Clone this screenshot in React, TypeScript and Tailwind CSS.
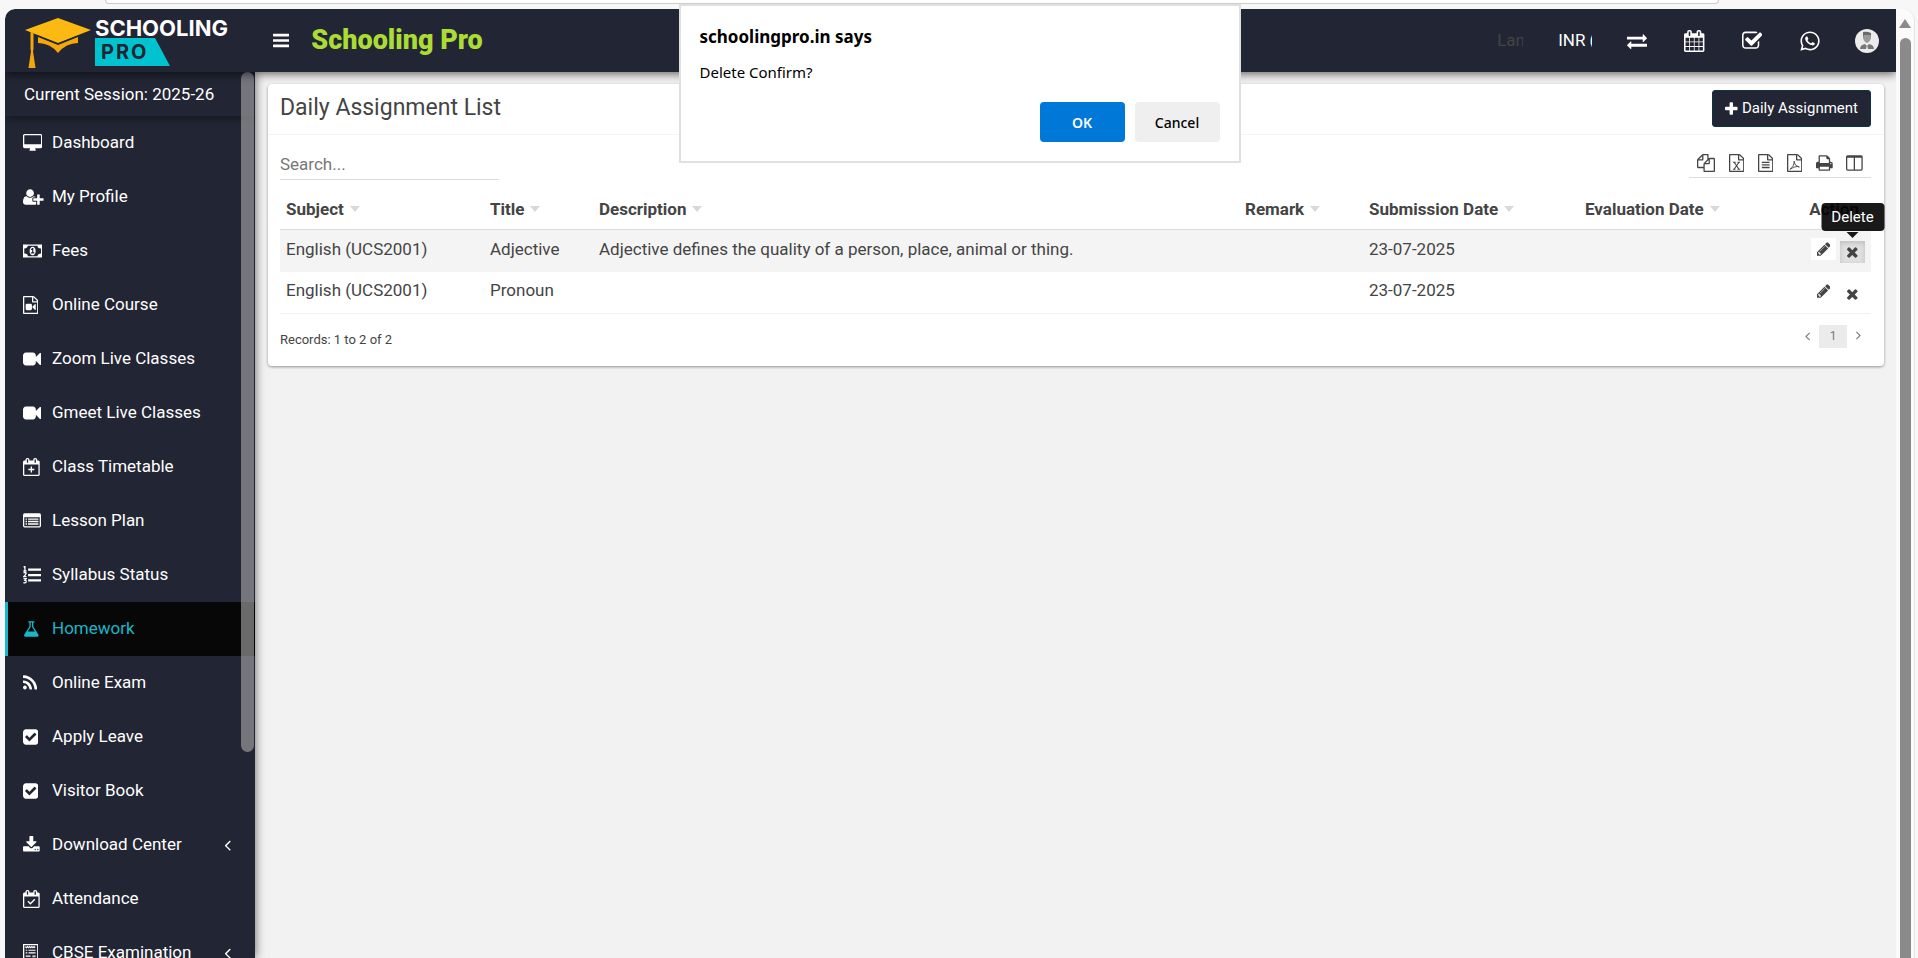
import type { ReactNode } from "react";
import { FaWhatsapp } from "react-icons/fa";

type IconProps = { className?: string };

// every glyph sits on a 1792 unit tall box, x and w crop its side bearings
function Glyph({
  d,
  x = 0,
  w = 1792,
  className = "h-[18px]",
  children,
}: IconProps & { d?: string; x?: number; w?: number; children?: ReactNode }) {
  return (
    <svg
      viewBox={`${x} 0 ${w} 1792`}
      className={`w-auto shrink-0 fill-current ${className}`}
      aria-hidden="true"
    >
      {d && <path fillRule="evenodd" d={d} />}
      {children}
    </svg>
  );
}

const paths = {
  bars: "M1664 1344v128q0 26-19 45t-45 19h-1408q-26 0-45-19t-19-45v-128q0-26 19-45t45-19h1408q26 0 45 19t19 45zm0-512v128q0 26-19 45t-45 19h-1408q-26 0-45-19t-19-45v-128q0-26 19-45t45-19h1408q26 0 45 19t19 45zm0-512v128q0 26-19 45t-45 19h-1408q-26 0-45-19t-19-45v-128q0-26 19-45t45-19h1408q26 0 45 19t19 45z",
  desktop:
    "M1792 992v-832q0-13-9.5-22.5t-22.5-9.5h-1600q-13 0-22.5 9.5t-9.5 22.5v832q0 13 9.5 22.5t22.5 9.5h1600q13 0 22.5-9.5t9.5-22.5zm128-832v1088q0 66-47 113t-113 47h-544q0 37 16 77.5t32 71 16 43.5q0 26-19 45t-45 19h-512q-26 0-45-19t-19-45q0-14 16-44t32-70 16-78h-544q-66 0-113-47t-47-113v-1088q0-66 47-113t113-47h1600q66 0 113 47t47 113z",
  userPlus:
    "M704 896q-159 0-271.5-112.5t-112.5-271.5 112.5-271.5 271.5-112.5 271.5 112.5 112.5 271.5-112.5 271.5-271.5 112.5zm960 128h352q13 0 22.5 9.5t9.5 22.5v192q0 13-9.5 22.5t-22.5 9.5h-352v352q0 13-9.5 22.5t-22.5 9.5h-192q-13 0-22.5-9.5t-9.5-22.5v-352h-352q-13 0-22.5-9.5t-9.5-22.5v-192q0-13 9.5-22.5t22.5-9.5h352v-352q0-13 9.5-22.5t22.5-9.5h192q13 0 22.5 9.5t9.5 22.5v352zm-736 224q0 52 38 90t90 38h256v238q-68 50-171 50h-874q-121 0-194-69t-73-190q0-53 3.5-103.5t14-109 26.5-108.5 43-97.5 62-81 85.5-53.5 111.5-20q19 0 39 17 79 61 154.5 91.5t164.5 30.5 164.5-30.5 154.5-91.5q20-17 39-17 132 0 217 96h-223q-52 0-90 38t-38 90v192z",
  file: "M1596 380q28 28 48 76t20 88v1152q0 40-28 68t-68 28h-1344q-40 0-68-28t-28-68v-1600q0-40 28-68t68-28h896q40 0 88 20t76 48zm-444-244v376h376q-10-29-22-41l-313-313q-12-12-41-22zm384 1528v-1024h-416q-40 0-68-28t-28-68v-416h-768v1536h1280z",
  video:
    "M1792 352v1088q0 42-39 59-13 5-25 5-27 0-45-19l-403-403v166q0 119-84.5 203.5t-203.5 84.5h-704q-119 0-203.5-84.5t-84.5-203.5v-704q0-119 84.5-203.5t203.5-84.5h704q119 0 203.5 84.5t84.5 203.5v165l403-402q18-19 45-19 12 0 25 5 39 17 39 59z",
  flask:
    "M1591 1448q56 89 21.5 152.5t-140.5 63.5h-1152q-106 0-140.5-63.5t21.5-152.5l503-793v-399h-64q-26 0-45-19t-19-45 19-45 45-19h512q26 0 45 19t19 45-19 45-45 19h-64v399zm-779-725l-272 429h712l-272-429-20-31v-436h-128v436z",
  rss: "M576 1344q0 80-56 136t-136 56-136-56-56-136 56-136 136-56 136 56 56 136zm512 123q2 28-17 48-18 21-47 21h-135q-25 0-43-16.5t-20-41.5q-22-229-184.5-391.5t-391.5-184.5q-25-2-41.5-20t-16.5-43v-135q0-29 21-47 17-17 43-17h5q160 13 306 80.5t259 181.5q114 113 181.5 259t80.5 306zm512 2q2 27-18 47-18 20-46 20h-143q-26 0-44.5-17.5t-19.5-42.5q-12-215-101-408.5t-231.5-336-336-231.5-408.5-102q-25-1-42.5-19.5t-17.5-43.5v-143q0-28 20-46 18-18 44-18h3q262 13 501.5 120t425.5 294q187 186 294 425.5t120 501.5z",
  checkSquare:
    "M813 1299l614-614q19-19 19-45t-19-45l-102-102q-19-19-45-19t-45 19l-467 467-211-211q-19-19-45-19t-45 19l-102 102q-19 19-19 45t19 45l358 358q19 19 45 19t45-19zm851-883v960q0 119-84.5 203.5t-203.5 84.5h-960q-119 0-203.5-84.5t-84.5-203.5v-960q0-119 84.5-203.5t203.5-84.5h960q119 0 203.5 84.5t84.5 203.5z",
  download:
    "M1344 1344q0-26-19-45t-45-19-45 19-19 45 19 45 45 19 45-19 19-45zm256 0q0-26-19-45t-45-19-45 19-19 45 19 45 45 19 45-19 19-45zm128-224v320q0 40-28 68t-68 28h-1472q-40 0-68-28t-28-68v-320q0-40 28-68t68-28h465l135 136q58 56 136 56t136-56l136-136h464q40 0 68 28t28 68zm-325-569q17 41-14 70l-448 448q-18 19-45 19t-45-19l-448-448q-31-29-14-70 17-39 59-39h256v-448q0-26 19-45t45-19h256q26 0 45 19t19 45v448h256q42 0 59 39z",
  calendar:
    "M192 1664h288v-288h-288v288zm352 0h320v-288h-320v288zm-352-352h288v-320h-288v320zm352 0h320v-320h-320v320zm-352-384h288v-288h-288v288zm736 736h320v-288h-320v288zm-384-736h320v-288h-320v288zm768 736h288v-288h-288v288zm-384-352h320v-320h-320v320zm-352-864v-288q0-13-9.5-22.5t-22.5-9.5h-64q-13 0-22.5 9.5t-9.5 22.5v288q0 13 9.5 22.5t22.5 9.5h64q13 0 22.5-9.5t9.5-22.5zm736 864h288v-320h-288v320zm-384-384h320v-288h-320v288zm384 0h288v-288h-288v288zm32-480v-288q0-13-9.5-22.5t-22.5-9.5h-64q-13 0-22.5 9.5t-9.5 22.5v288q0 13 9.5 22.5t22.5 9.5h64q13 0 22.5-9.5t9.5-22.5zm384-64v1280q0 52-38 90t-90 38h-1408q-52 0-90-38t-38-90v-1280q0-52 38-90t90-38h128v-96q0-66 47-113t113-47h64q66 0 113 47t47 113v96h384v-96q0-66 47-113t113-47h64q66 0 113 47t47 113v96h128q52 0 90 38t38 90z",
  calendarFrame:
    "M192 1664h1408v-1024h-1408v1024zm384-1216v-288q0-13-9.5-22.5t-22.5-9.5h-64q-13 0-22.5 9.5t-9.5 22.5v288q0 13 9.5 22.5t22.5 9.5h64q13 0 22.5-9.5t9.5-22.5zm768 0v-288q0-13-9.5-22.5t-22.5-9.5h-64q-13 0-22.5 9.5t-9.5 22.5v288q0 13 9.5 22.5t22.5 9.5h64q13 0 22.5-9.5t9.5-22.5zm384-64v1280q0 52-38 90t-90 38h-1408q-52 0-90-38t-38-90v-1280q0-52 38-90t90-38h128v-96q0-66 47-113t113-47h64q66 0 113 47t47 113v96h384v-96q0-66 47-113t113-47h64q66 0 113 47t47 113v96h128q52 0 90 38t38 90z",
  checkOutline:
    "M1472 930v318q0 119-84.5 203.5t-203.5 84.5h-832q-119 0-203.5-84.5t-84.5-203.5v-832q0-119 84.5-203.5t203.5-84.5h832q63 0 117 25 15 7 18 23 3 17-9 29l-49 49q-10 10-23 10-3 0-9-2-23-6-45-6h-832q-66 0-113 47t-47 113v832q0 66 47 113t113 47h832q66 0 113-47t47-113v-254q0-13 9-22l64-64q10-10 23-10 6 0 12 3 20 8 20 29zm231-489l-814 814q-24 24-57 24t-57-24l-430-430q-24-24-24-57t24-57l110-110q24-24 57-24t57 24l263 263 647-647q24-24 57-24t57 24l110 110q24 24 24 57t-24 57z",
  exchange:
    "M1792 1184v192q0 13-9.5 22.5t-22.5 9.5h-1376v192q0 13-9.5 22.5t-22.5 9.5q-12 0-24-10l-319-320q-9-9-9-22 0-14 9-23l320-320q9-9 23-9 13 0 22.5 9.5t9.5 22.5v192h1376q13 0 22.5 9.5t9.5 22.5zm0-544q0 14-9 23l-320 320q-9 9-23 9-13 0-22.5-9.5t-9.5-22.5v-192h-1376q-13 0-22.5-9.5t-9.5-22.5v-192q0-13 9.5-22.5t22.5-9.5h1376v-192q0-14 9-23t23-9q12 0 24 10l319 319q9 9 9 23z",
  pencil:
    "M491 1536l91-91-235-235-91 91v107h128v128h107zm523-928q0-22-22-22-10 0-17 7l-542 542q-7 7-7 17 0 22 22 22 10 0 17-7l542-542q7-7 7-17zm-54-192l416 416-832 832h-416v-416zm683 96q0 53-37 90l-166 166-416-416 166-165q36-38 90-38 53 0 91 38l235 234q37 39 37 91z",
  times:
    "M1490 1322q0 40-28 68l-136 136q-28 28-68 28t-68-28l-294-294-294 294q-28 28-68 28t-68-28l-136-136q-28-28-28-68t28-68l294-294-294-294q-28-28-28-68t28-68l136-136q28-28 68-28t68 28l294 294 294-294q28-28 68-28t68 28l136 136q28 28 28 68t-28 68l-294 294 294 294q28 28 28 68z",
  plus: "M1600 736v192q0 40-28 68t-68 28h-416v416q0 40-28 68t-68 28h-192q-40 0-68-28t-28-68v-416h-416q-40 0-68-28t-28-68v-192q0-40 28-68t68-28h416v-416q0-40 28-68t68-28h192q40 0 68 28t28 68v416h416q40 0 68 28t28 68z",
  print:
    "M448 1536h896v-256h-896v256zm0-640h896v-384h-160q-40 0-68-28t-28-68v-160h-640v640zm1152 64q0-26-19-45t-45-19-45 19-19 45 19 45 45 19 45-19 19-45zm128 0v416q0 13-9.5 22.5t-22.5 9.5h-224v160q0 40-28 68t-68 28h-960q-40 0-68-28t-28-68v-160h-224q-13 0-22.5-9.5t-9.5-22.5v-416q0-79 56.5-135.5t135.5-56.5h64v-544q0-40 28-68t68-28h672q40 0 88 20t76 48l152 152q28 28 48 76t20 88v256h64q79 0 135.5 56.5t56.5 135.5z",
  columns:
    "M224 1536h608v-1152h-640v1120q0 13 9.5 22.5t22.5 9.5zm1376-32v-1120h-640v1152h608q13 0 22.5-9.5t9.5-22.5zm128-1216v1216q0 66-47 113t-113 47h-1344q-66 0-113-47t-47-113v-1216q0-66 47-113t113-47h1344q66 0 113 47t47 113z",
  copy: "M1696 384q40 0 68 28t28 68v1216q0 40-28 68t-68 28h-960q-40 0-68-28t-28-68v-288h-544q-40 0-68-28t-28-68v-672q0-40 20-88t48-76l408-408q28-28 76-48t88-20h416q40 0 68 28t28 68v328q68-40 128-40h416zm-544 213l-299 299h299v-299zm-640-384l-299 299h299v-299zm196 647l316-316v-416h-384v416q0 40-28 68t-68 28h-416v640h512v-256q0-40 20-88t48-76zm956 804v-1152h-384v416q0 40-28 68t-68 28h-416v640h896z",
  angleLeft:
    "M1203 544q0 13-10 23l-393 393 393 393q10 10 10 23t-10 23l-50 50q-10 10-23 10t-23-10l-466-466q-10-10-10-23t10-23l466-466q10-10 23-10t23 10l50 50q10 10 10 23z",
};

const CalendarIcon = ({ mark }: { mark: string }) => (
  <Glyph d={paths.calendarFrame} x={64} w={1664}>
    <path d={mark} fill="none" stroke="currentColor" strokeWidth="140" />
  </Glyph>
);

const MoneyIcon = () => (
  <Glyph
    w={1920}
    d="M0 256H1920V1536H0zM480 384H1440Q1440 540 1550 600T1792 640V1152Q1650 1160 1550 1220T1440 1408H480Q480 1250 370 1190T128 1152V640Q270 640 370 570T480 384z"
  >
    <path
      fillRule="evenodd"
      d="M960 470c180 0 300 190 300 426s-120 426-300 426-300-190-300-426 120-426 300-426zM800 1030v120h330v-120h-100V600H920L780 720l70 90 60-50v270z"
    />
  </Glyph>
);

const FileVideoIcon = () => (
  <Glyph d={paths.file} x={128} w={1536}>
    <path d="M520 768h370q128 0 128 128v384q0 128-128 128H520q-128 0-128-128V896q0-128 128-128zM1060 1060l270-270q70-10 70 50v500q0 60-70 50l-270-270z" />
  </Glyph>
);

const ListAltIcon = () => (
  <Glyph
    w={1792}
    d="M160 128H1632Q1792 128 1792 288V1376Q1792 1536 1632 1536H160Q0 1536 0 1376V288Q0 128 160 128zM128 512V1376Q128 1408 160 1408H1632Q1664 1408 1664 1376V512z"
  >
    <path d="M256 640h140v130H256zM500 640h1036v130H500zM256 880h140v130H256zM500 880h1036v130H500zM256 1130h140v130H256zM500 1130h1036v130H500z" />
  </Glyph>
);

const ListOlIcon = () => (
  <Glyph w={1792}>
    <path d="M512 256h1280v224H512zM512 784h1280v224H512zM512 1312h1280v224H512z" />
    <path
      d="M60 110L190 40V480M40 500H350M50 700Q190 600 310 700Q330 850 50 1060H350M50 1260H310L190 1420Q330 1430 320 1570Q250 1740 40 1660"
      fill="none"
      stroke="currentColor"
      strokeWidth="130"
    />
  </Glyph>
);

const ExamIcon = () => (
  <Glyph
    x={128}
    w={1536}
    d="M128 0H1664V1792H128zM256 128V1664H1536V128z"
  >
    <path
      d="M350 260l110 110 110-110 110 110 110-110 110 110 110-110 110 110 110-110 110 110M400 620h160M680 620h700M400 880h160M680 880h700M400 1200h480M1060 1200h320M1060 1420h320"
      fill="none"
      stroke="currentColor"
      strokeWidth="120"
    />
  </Glyph>
);

const menu: { label: string; icon: ReactNode; active?: boolean; nested?: boolean }[] = [
  { label: "Dashboard", icon: <Glyph d={paths.desktop} w={1920} /> },
  { label: "My Profile", icon: <Glyph d={paths.userPlus} w={2048} /> },
  { label: "Fees", icon: <MoneyIcon /> },
  { label: "Online Course", icon: <FileVideoIcon /> },
  { label: "Zoom Live Classes", icon: <Glyph d={paths.video} /> },
  { label: "Gmeet Live Classes", icon: <Glyph d={paths.video} /> },
  { label: "Class Timetable", icon: <CalendarIcon mark="M896 850V1450M596 1150H1196" /> },
  { label: "Lesson Plan", icon: <ListAltIcon /> },
  { label: "Syllabus Status", icon: <ListOlIcon /> },
  { label: "Homework", icon: <Glyph d={paths.flask} x={64} w={1664} />, active: true },
  { label: "Online Exam", icon: <Glyph d={paths.rss} x={192} w={1408} /> },
  { label: "Apply Leave", icon: <Glyph d={paths.checkSquare} x={128} w={1536} /> },
  { label: "Visitor Book", icon: <Glyph d={paths.checkSquare} x={128} w={1536} /> },
  { label: "Download Center", icon: <Glyph d={paths.download} x={64} w={1664} />, nested: true },
  { label: "Attendance", icon: <CalendarIcon mark="M560 1120L800 1360L1240 920" /> },
  { label: "CBSE Examination", icon: <ExamIcon />, nested: true },
];

const exportTools = [
  { label: "Copy", icon: <Glyph d={paths.copy} /> },
  {
    label: "Excel",
    icon: (
      <Glyph d={paths.file} x={128} w={1536}>
        <path
          d="M620 800l520 740M1140 800l-520 740M520 820h270M970 820h250M520 1520h250M970 1520h270"
          fill="none"
          stroke="currentColor"
          strokeWidth="110"
        />
      </Glyph>
    ),
  },
  {
    label: "CSV",
    icon: (
      <Glyph d={paths.file} x={128} w={1536}>
        <path d="M512 768h768v128H512zM512 1024h768v128H512zM512 1280h768v128H512z" />
      </Glyph>
    ),
  },
  {
    label: "PDF",
    icon: (
      <Glyph d={paths.file} x={128} w={1536}>
        <path
          d="M420 1530Q800 1300 880 760Q850 640 810 760Q900 1180 1340 1320Q1400 1240 1200 1230Q800 1250 420 1530z"
          fill="none"
          stroke="currentColor"
          strokeWidth="90"
        />
      </Glyph>
    ),
  },
  { label: "Print", icon: <Glyph d={paths.print} x={64} w={1664} /> },
  { label: "Columns", icon: <Glyph d={paths.columns} x={64} w={1664} /> },
];

const columns = [
  { label: "Subject", width: "w-[204px]" },
  { label: "Title", width: "w-[109px]" },
  { label: "Description", width: "" },
  { label: "Remark", width: "w-[124px]" },
  { label: "Submission Date", width: "w-[216px]" },
  { label: "Evaluation Date", width: "w-[190px]" },
];

const rows = [
  {
    subject: "English (UCS2001)",
    title: "Adjective",
    description: "Adjective defines the quality of a person, place, animal or thing.",
    submission: "23-07-2025",
  },
  {
    subject: "English (UCS2001)",
    title: "Pronoun",
    description: "",
    submission: "23-07-2025",
  },
];

function Logo() {
  return (
    <a href="#" className="flex w-[250px] shrink-0 items-start pt-[6px] pl-5" aria-label="Schooling Pro home">
      <svg viewBox="0 0 66 51" className="h-[51px] w-[66px]" aria-hidden="true">
        <path d="M13 19L33 27L53 19V25Q41 25 33 35Q25 25 13 25z" fill="#f3a70c" />
        <path d="M0 12L33 0L66 12L33 25z" fill="#fbb911" />
        <path d="M12 17.500L33 26L54 17.500" fill="none" stroke="#222533" strokeWidth="1" />
        <path d="M5.500 14h3v17l-.5 2L10.500 50h-7L6 33l-.5-2z" fill="#f3a70c" />
      </svg>
      <div className="ml-1 flex flex-col items-start font-['Inter',sans-serif]">
        <span className="text-[22px] leading-[20px] font-bold">SCHOOLING</span>
        <span className="flex h-7 w-[75px] items-center bg-[#00c3cf] pl-[6px] text-[20px] font-bold tracking-widest text-[#222533] [clip-path:polygon(0_0,80%_0,100%_100%,0_100%)]">
          PRO
        </span>
      </div>
    </a>
  );
}

function Header() {
  return (
    <header className="relative z-20 flex h-[63px] shrink-0 items-center rounded-tl-[10px] bg-[#222533] text-white shadow-[0_2px_10px_rgba(0,0,0,0.6)]">
      <Logo />
      <button type="button" aria-label="Toggle sidebar" className="ml-[18px]">
        <Glyph d={paths.bars} x={128} w={1536} className="h-[19px]" />
      </button>
      <span className="ml-[22px] text-[27px] font-black text-[#abdc36]">Schooling Pro</span>
      <div className="ml-auto flex items-center pr-[17px]">
        <select
          aria-label="Language"
          className="w-[26px] appearance-none bg-transparent text-[17px] text-[#444444]"
        >
          <option>Language</option>
        </select>
        <select
          aria-label="Currency"
          className="ml-[35px] w-[34px] appearance-none bg-transparent text-[17px]"
        >
          <option>INR (₹)</option>
        </select>
        <button type="button" aria-label="Switch" className="ml-[35px]">
          <Glyph d={paths.exchange} className="h-5" />
        </button>
        <a href="#" aria-label="Calendar" className="ml-[37px]">
          <Glyph d={paths.calendar} x={64} w={1664} className="h-[22px]" />
        </a>
        <a href="#" aria-label="Tasks" className="ml-[37px]">
          <Glyph d={paths.checkOutline} x={64} w={1664} className="h-[22px]" />
        </a>
        <a href="#" aria-label="WhatsApp" className="ml-[37px]">
          <FaWhatsapp className="size-[22px]" />
        </a>
        <button type="button" aria-label="Account" className="ml-[34px]">
          <svg viewBox="0 0 24 24" className="size-6" aria-hidden="true">
            <circle cx="12" cy="12" r="12" fill="#ececec" />
            <path d="M8 5q4-1 8 0v4q-1 4-4 5-3-1-4-5z" fill="#9a9a9a" />
            <path d="M8 3q4-1 8 1v3l-1-1H9L8 8z" fill="#6b6b6b" />
            <path d="M5 20q0-4 5-5l2 2 2-2q5 1 5 5z" fill="#777" />
            <path d="M12 16l1 4h-2z" fill="#eee" />
          </svg>
        </button>
      </div>
    </header>
  );
}

function Sidebar() {
  return (
    <aside className="relative z-10 flex w-[250px] shrink-0 flex-col overflow-hidden bg-[#222533] text-[17px] text-white shadow-[0_0_10px_rgba(0,0,0,0.6)]">
      <p className="h-[44px] shrink-0 pl-[19px] leading-[44px] shadow-[0_2px_8px_rgba(0,0,0,0.4)]">
        Current Session: 2025-26
      </p>
      <nav>
        {menu.map((item) => (
          <a
            key={item.label}
            href="#"
            className={
              item.active
                ? "flex h-[54px] items-center border-l-[3px] border-[#19b5cb] bg-[#070707] pl-[15px] text-[#19b5cb]"
                : "flex h-[54px] items-center pl-[18px]"
            }
          >
            <span className="flex w-[29px] items-center">{item.icon}</span>
            <span className="flex-1">{item.label}</span>
            {item.nested && (
              <Glyph d={paths.angleLeft} x={640} w={600} className="mr-[24px] h-[18px]" />
            )}
          </a>
        ))}
      </nav>
      {/* overlay scrollbar */}
      <div className="absolute top-0 right-px h-[680px] w-[13px] rounded-full bg-[#adadad]/60" />
    </aside>
  );
}

function ActionButtons({ pressed }: { pressed: boolean }) {
  return (
    <div className="flex items-start justify-end gap-1">
      <button type="button" aria-label="Edit" className="flex h-[22px] w-[25px] items-center justify-center bg-white">
        <Glyph d={paths.pencil} x={128} w={1536} className="h-4" />
      </button>
      <div className="relative pt-[3px]">
        <button
          type="button"
          aria-label="Delete"
          className={
            pressed
              ? "flex h-[22px] w-[25px] items-center justify-center bg-[#e0e0e0] shadow-[inset_0_2px_5px_rgba(0,0,0,0.15)]"
              : "flex h-[22px] w-[25px] items-center justify-center"
          }
        >
          <Glyph d={paths.times} x={192} w={1408} className="h-4" />
        </button>
        {pressed && (
          <div
            role="tooltip"
            className="absolute bottom-full left-1/2 mb-[7px] h-7 w-[63px] -translate-x-1/2 rounded bg-black/90 text-center text-[15px] leading-7 text-white"
          >
            Delete
            <span className="absolute top-full left-1/2 mt-px -translate-x-1/2 border-x-[6px] border-t-[6px] border-transparent border-t-black/90" />
          </div>
        )}
      </div>
    </div>
  );
}

function AssignmentTable() {
  return (
    <table className="w-full table-fixed text-left text-[17px] text-[#444444]">
      <thead>
        <tr className="h-[49px] border-b border-[#dcdcdc]">
          {columns.map((column) => (
            <th key={column.label} className={`pt-[10px] pl-[6px] font-bold ${column.width}`}>
              <span className="flex items-center gap-[6px]">
                {column.label}
                <span className="border-x-[5px] border-t-[6px] border-transparent border-t-[#d9d9d9]" />
              </span>
            </th>
          ))}
          <th className="w-[102px] pt-[10px] pr-[12px] text-right font-bold">Action</th>
        </tr>
      </thead>
      <tbody>
        {rows.map((row, i) => (
          <tr
            key={row.title}
            className={i === 0 ? "h-[43px] bg-[#f4f4f4]" : "h-[41px] border-b border-[#f1f1f1]"}
          >
            <td className="pb-[3px] pl-[6px]">{row.subject}</td>
            <td className="pb-[3px] pl-[6px]">{row.title}</td>
            <td className="pb-[3px] pl-[6px]">{row.description}</td>
            <td />
            <td className="pb-[3px] pl-[6px]">{row.submission}</td>
            <td />
            <td className="pr-[6px]">
              <ActionButtons pressed={i === 0} />
            </td>
          </tr>
        ))}
      </tbody>
    </table>
  );
}

function AssignmentCard() {
  return (
    <section className="rounded bg-white pr-[13px] pb-[17px] pl-3 text-[#444444] shadow-[0_1px_3px_rgba(0,0,0,0.4)]">
      <div className="-mr-[13px] -ml-3 flex h-[51px] items-center justify-between border-b border-[#f4f4f4] pr-[13px] pb-px pl-3">
        <h1 className="text-[23px]">Daily Assignment List</h1>
        <button
          type="button"
          className="flex h-[37px] items-center gap-1 rounded-[3px] border border-[#0d3349] bg-[#222533] px-3 text-[15px] text-white"
        >
          <Glyph d={paths.plus} x={192} w={1408} className="h-4" />
          Daily Assignment
        </button>
      </div>
      <div className="flex h-[45px] items-end justify-between">
        <input
          type="search"
          aria-label="Search assignments"
          placeholder="Search..."
          className="h-8 w-[219px] border-b border-[#dcdcdc] text-[17px] placeholder:text-[#777777]"
        />
        <div className="mb-[2px] flex h-7 w-[182px] items-center justify-between border-b border-[#dcdcdc] px-2 pb-[2px]">
          {exportTools.map((tool) => (
            <button key={tool.label} type="button" aria-label={tool.label}>
              {tool.icon}
            </button>
          ))}
        </div>
      </div>
      <AssignmentTable />
      <div className="mt-[11px] flex items-start justify-between">
        <p className="pt-[5px] text-[13px]">Records: 1 to 2 of 2</p>
        <div className="flex h-[23px] items-center pr-[10px] text-[12px] text-[#777777]">
          <button type="button" aria-label="Previous page">
            <Glyph d={paths.angleLeft} x={576} w={640} className="h-[14px]" />
          </button>
          <button type="button" className="mx-[9px] h-[23px] w-7 bg-[#ebebeb]">
            1
          </button>
          <button type="button" aria-label="Next page">
            <Glyph d={paths.angleLeft} x={576} w={640} className="h-[14px] rotate-180" />
          </button>
        </div>
      </div>
    </section>
  );
}

function ConfirmDialog() {
  return (
    <div className="absolute inset-x-0 top-1 z-30 flex justify-center pl-px">
      <div
        role="alertdialog"
        aria-labelledby="confirm-title"
        aria-describedby="confirm-text"
        className="flex w-[562px] flex-col border-2 border-[#e0e0e0] bg-white p-[19px] font-['Noto_Sans',sans-serif] text-[15px] text-black"
      >
        <h2 id="confirm-title" className="text-[17px] leading-6 font-bold">
          schoolingpro.in says
        </h2>
        <p id="confirm-text" className="mt-[11px] leading-6">
          Delete Confirm?
        </p>
        <div className="mt-[18px] flex justify-end gap-[10px] text-[14px] font-semibold">
          <button type="button" className="h-10 w-[85px] rounded bg-[#0078d7] text-white">
            OK
          </button>
          <button type="button" className="h-10 w-[85px] rounded bg-[#efefef] font-medium">
            Cancel
          </button>
        </div>
      </div>
    </div>
  );
}

export default function App() {
  return (
    <div className="relative flex h-screen flex-col overflow-hidden bg-[#f7f7f7] font-['Roboto',sans-serif]">
      <div className="flex h-[9px] shrink-0 items-start pl-[105px]">
        <div className="h-1 w-[89%] rounded-b-[14px] border border-t-0 border-[#cccccc] bg-white" />
      </div>
      <div className="flex min-h-0 flex-1 pr-[3px] pl-[5px]">
        <div className="flex min-w-0 flex-1 flex-col overflow-hidden rounded-tl-[10px] bg-[#f2f2f2]">
          <Header />
          <div className="flex min-h-0 flex-1">
            <Sidebar />
            <main className="min-w-0 flex-1 pt-3 pr-3 pl-[13px]">
              <AssignmentCard />
            </main>
          </div>
        </div>
        {/* window scrollbar */}
        <div className="flex w-[19px] shrink-0 flex-col items-center rounded-tr-xl border-r border-[#e6e6e6] bg-[#fbfbfb] pt-[10px]">
          <span className="border-x-[6px] border-b-[9px] border-transparent border-b-[#8b8b8b]" />
          <span className="mt-[10px] w-[11px] flex-1 rounded-t-full bg-[#8b8b8b]" />
        </div>
      </div>
      <ConfirmDialog />
    </div>
  );
}
